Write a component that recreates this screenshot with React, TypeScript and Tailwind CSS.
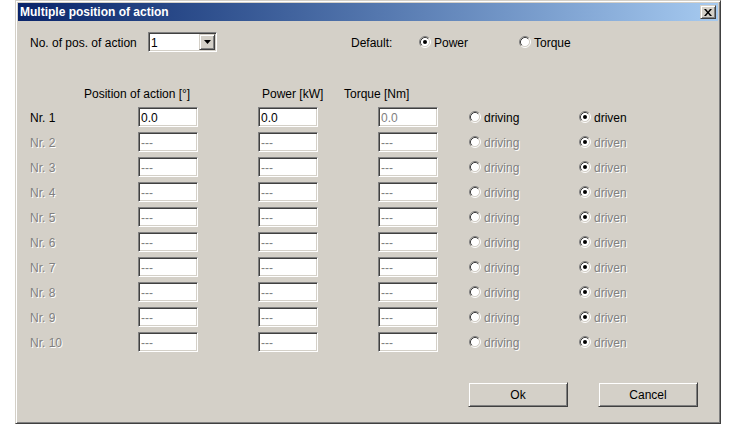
import React from 'react';

const raised =
  'bg-[#d4d0c8] border border-t-[#d4d0c8] border-l-[#d4d0c8] border-r-[#404040] border-b-[#404040] shadow-[inset_1px_1px_0_#fff,inset_-1px_-1px_0_#808080]';
const sunken =
  'bg-white border border-t-[#808080] border-l-[#808080] border-r-white border-b-white shadow-[inset_1px_1px_0_#404040,inset_-1px_-1px_0_#d4d0c8]';
const dimText = 'text-[#808080] [text-shadow:1px_1px_0_#fff]';

function Radio({ checked }: { checked?: boolean }) {
  return (
    <svg width="12" height="12" viewBox="0 0 12 12" className="shrink-0">
      <circle cx="6" cy="6" r="4.5" fill="#fff" />
      <path d="M2.11 9.89A5.5 5.5 0 0 1 9.89 2.11" stroke="#808080" fill="none" />
      <path d="M9.89 2.11A5.5 5.5 0 0 1 2.11 9.89" stroke="#fff" fill="none" />
      <path d="M2.82 9.18A4.5 4.5 0 0 1 9.18 2.82" stroke="#404040" fill="none" />
      <path d="M9.18 2.82A4.5 4.5 0 0 1 2.82 9.18" stroke="#d4d0c8" fill="none" />
      {checked && <circle cx="6" cy="6" r="2" fill="#000" />}
    </svg>
  );
}

function Option({ label, checked, disabled }: { label: string; checked?: boolean; disabled?: boolean }) {
  return (
    <div className="flex items-center gap-[3px]">
      <Radio checked={checked} />
      <span className={`pt-[2px] ${disabled ? dimText : 'text-black'}`}>{label}</span>
    </div>
  );
}

function Field({ value, grey }: { value: string; grey?: boolean }) {
  return (
    <div className={`w-[60px] h-[20px] shrink-0 flex items-center pl-[2px] pt-[2px] leading-none ${sunken} ${grey ? 'text-[#808080]' : 'text-black'}`}>
      {value}
    </div>
  );
}

export default function App() {
  const rows = Array.from({ length: 10 }, (_, i) => i + 1);

  return (
    <div className="w-[736px] h-[440px] bg-white font-['Liberation_Sans',Arial,sans-serif] text-[12px]">
      <div className={`ml-[15px] w-[706px] h-[424px] p-[2px] flex flex-col ${raised} border-l-[#808080] shadow-[inset_1px_1px_0_#fff,inset_-1px_-1px_0_#808080,2px_5px_9px_rgba(0,0,0,0.55)]`}>
        {/* Title bar */}
        <div className="h-[18px] shrink-0 flex items-center justify-between pl-[2px] pr-[2px] bg-linear-to-r from-[#0a246a] to-[#a6caf0]">
          <span className="text-white font-bold text-[12px] leading-none">Multiple position of action</span>
          <div className={`w-[16px] h-[14px] flex items-center justify-center ${raised}`}>
            <svg width="8" height="7" viewBox="0 0 8 7">
              <path d="M0 0h2l2 2.4L6 0h2L5 3.5 8 7H6L4 4.6 2 7H0l3-3.5z" fill="#000" />
            </svg>
          </div>
        </div>

        {/* Count / default */}
        <div className="mt-[11px] pl-[12px] h-[20px] flex items-center">
          <span className="w-[118px] pt-[2px]">No. of pos. of action</span>
          <div className={`w-[69px] h-[20px] flex items-center ${sunken}`}>
            <span className="flex-1 pl-[2px] pt-[2px] leading-none">1</span>
            <div className={`w-[16px] h-[16px] m-[1px] flex items-center justify-center ${raised}`}>
              <svg width="7" height="4" viewBox="0 0 7 4">
                <path d="M0 0h7L3.5 4z" fill="#000" />
              </svg>
            </div>
          </div>
          <span className="ml-[134px] w-[68px] pt-[2px]">Default:</span>
          <div className="w-[100px]">
            <Option label="Power" checked />
          </div>
          <Option label="Torque" />
        </div>

        {/* Column headers */}
        <div className="mt-[34px] h-[16px] pl-[66px] flex items-center">
          <span className="w-[178px]">Position of action [°]</span>
          <span className="w-[82px]">Power [kW]</span>
          <span>Torque [Nm]</span>
        </div>

        {/* Rows */}
        <div className="mt-[5px] flex flex-col gap-[5px]">
          {rows.map((n) => {
            const on = n === 1;
            return (
              <div key={n} className="h-[20px] pl-[12px] flex items-center">
                <span className={`w-[108px] pt-[2px] ${on ? 'text-black' : dimText}`}>Nr. {n}</span>
                <Field value={on ? '0.0' : '---'} grey={!on} />
                <div className="ml-[60px]">
                  <Field value={on ? '0.0' : '---'} grey={!on} />
                </div>
                <div className="ml-[60px]">
                  <Field value={on ? '0.0' : '---'} grey />
                </div>
                <div className="ml-[31px] w-[110px]">
                  <Option label="driving" disabled={!on} />
                </div>
                <Option label="driven" checked disabled={!on} />
              </div>
            );
          })}
        </div>

        {/* Buttons */}
        <div className="mt-[30px] pl-[450px] flex gap-[30px]">
          <button className={`w-[100px] h-[25px] pt-[1px] text-black ${raised}`}>Ok</button>
          <button className={`w-[100px] h-[25px] pt-[1px] text-black ${raised}`}>Cancel</button>
        </div>
      </div>
    </div>
  );
}
